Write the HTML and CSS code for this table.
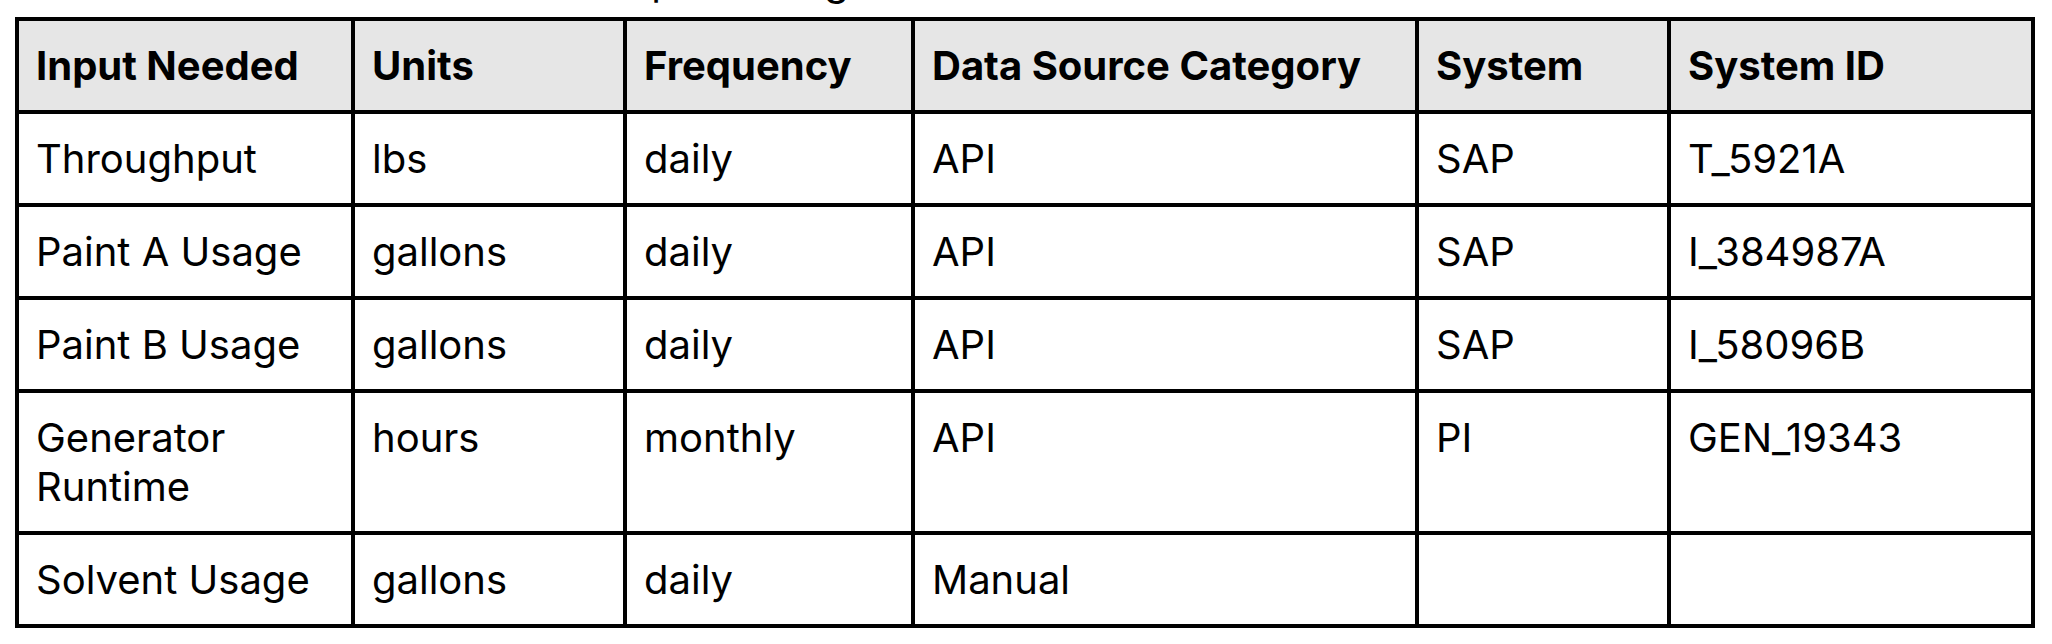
FILE: index.html
```html
<!DOCTYPE html>
<html lang="en">
<head>
<meta charset="utf-8">
<title>Data inputs</title>
<link rel="stylesheet" href="styles.css">
</head>
<body>
<div class="caption-clip">
  <p class="caption">All needed data inputs along with their</p>
</div>
<table class="inputs">
  <thead>
    <tr>
      <th class="c1">Input Needed</th>
      <th class="c2">Units</th>
      <th class="c3">Frequency</th>
      <th class="c4">Data Source Category</th>
      <th class="c5">System</th>
      <th class="c6">System ID</th>
    </tr>
  </thead>
  <tbody>
    <tr>
      <td>Throughput</td>
      <td>lbs</td>
      <td>daily</td>
      <td>API</td>
      <td>SAP</td>
      <td>T_5921A</td>
    </tr>
    <tr>
      <td>Paint A Usage</td>
      <td>gallons</td>
      <td>daily</td>
      <td>API</td>
      <td>SAP</td>
      <td>I_384987A</td>
    </tr>
    <tr>
      <td>Paint B Usage</td>
      <td>gallons</td>
      <td>daily</td>
      <td>API</td>
      <td>SAP</td>
      <td>I_58096B</td>
    </tr>
    <tr>
      <td>Generator Runtime</td>
      <td>hours</td>
      <td>monthly</td>
      <td>API</td>
      <td>PI</td>
      <td>GEN_19343</td>
    </tr>
    <tr>
      <td>Solvent Usage</td>
      <td>gallons</td>
      <td>daily</td>
      <td>Manual</td>
      <td></td>
      <td></td>
    </tr>
  </tbody>
</table>
</body>
</html>
```
FILE: styles.css
```css
html, body {
  margin: 0;
  padding: 0;
  background: #ffffff;
}

body {
  font-family: Inter, "Noto Sans", "Liberation Sans", sans-serif;
  color: #000000;
  font-size: 40px;
}

.caption-clip {
  height: 10px;
  overflow: hidden;
  margin-left: 312px;
}

.caption {
  margin: -44px 0 0 0;
  font-size: 40px;
  line-height: normal;
  white-space: nowrap;
}

.inputs {
  margin: 7px 0 0 15px;
  width: 2020px;
  table-layout: fixed;
  border-collapse: separate;
  border-spacing: 0;
  border-top: 4px solid #000;
  border-left: 4px solid #000;
}

.inputs th,
.inputs td {
  box-sizing: border-box;
  padding: 20px 17px;
  border-right: 4px solid #000;
  border-bottom: 4px solid #000;
  text-align: left;
  vertical-align: top;
  font-size: 40px;
  line-height: normal;
}

.inputs th {
  background: #e6e6e6;
  font-weight: 700;
}

.inputs td {
  font-weight: 400;
}

.c1 { width: 336px; }
.c2 { width: 272px; }
.c3 { width: 288px; }
.c4 { width: 504px; }
.c5 { width: 252px; }
.c6 { width: 364px; }
```
